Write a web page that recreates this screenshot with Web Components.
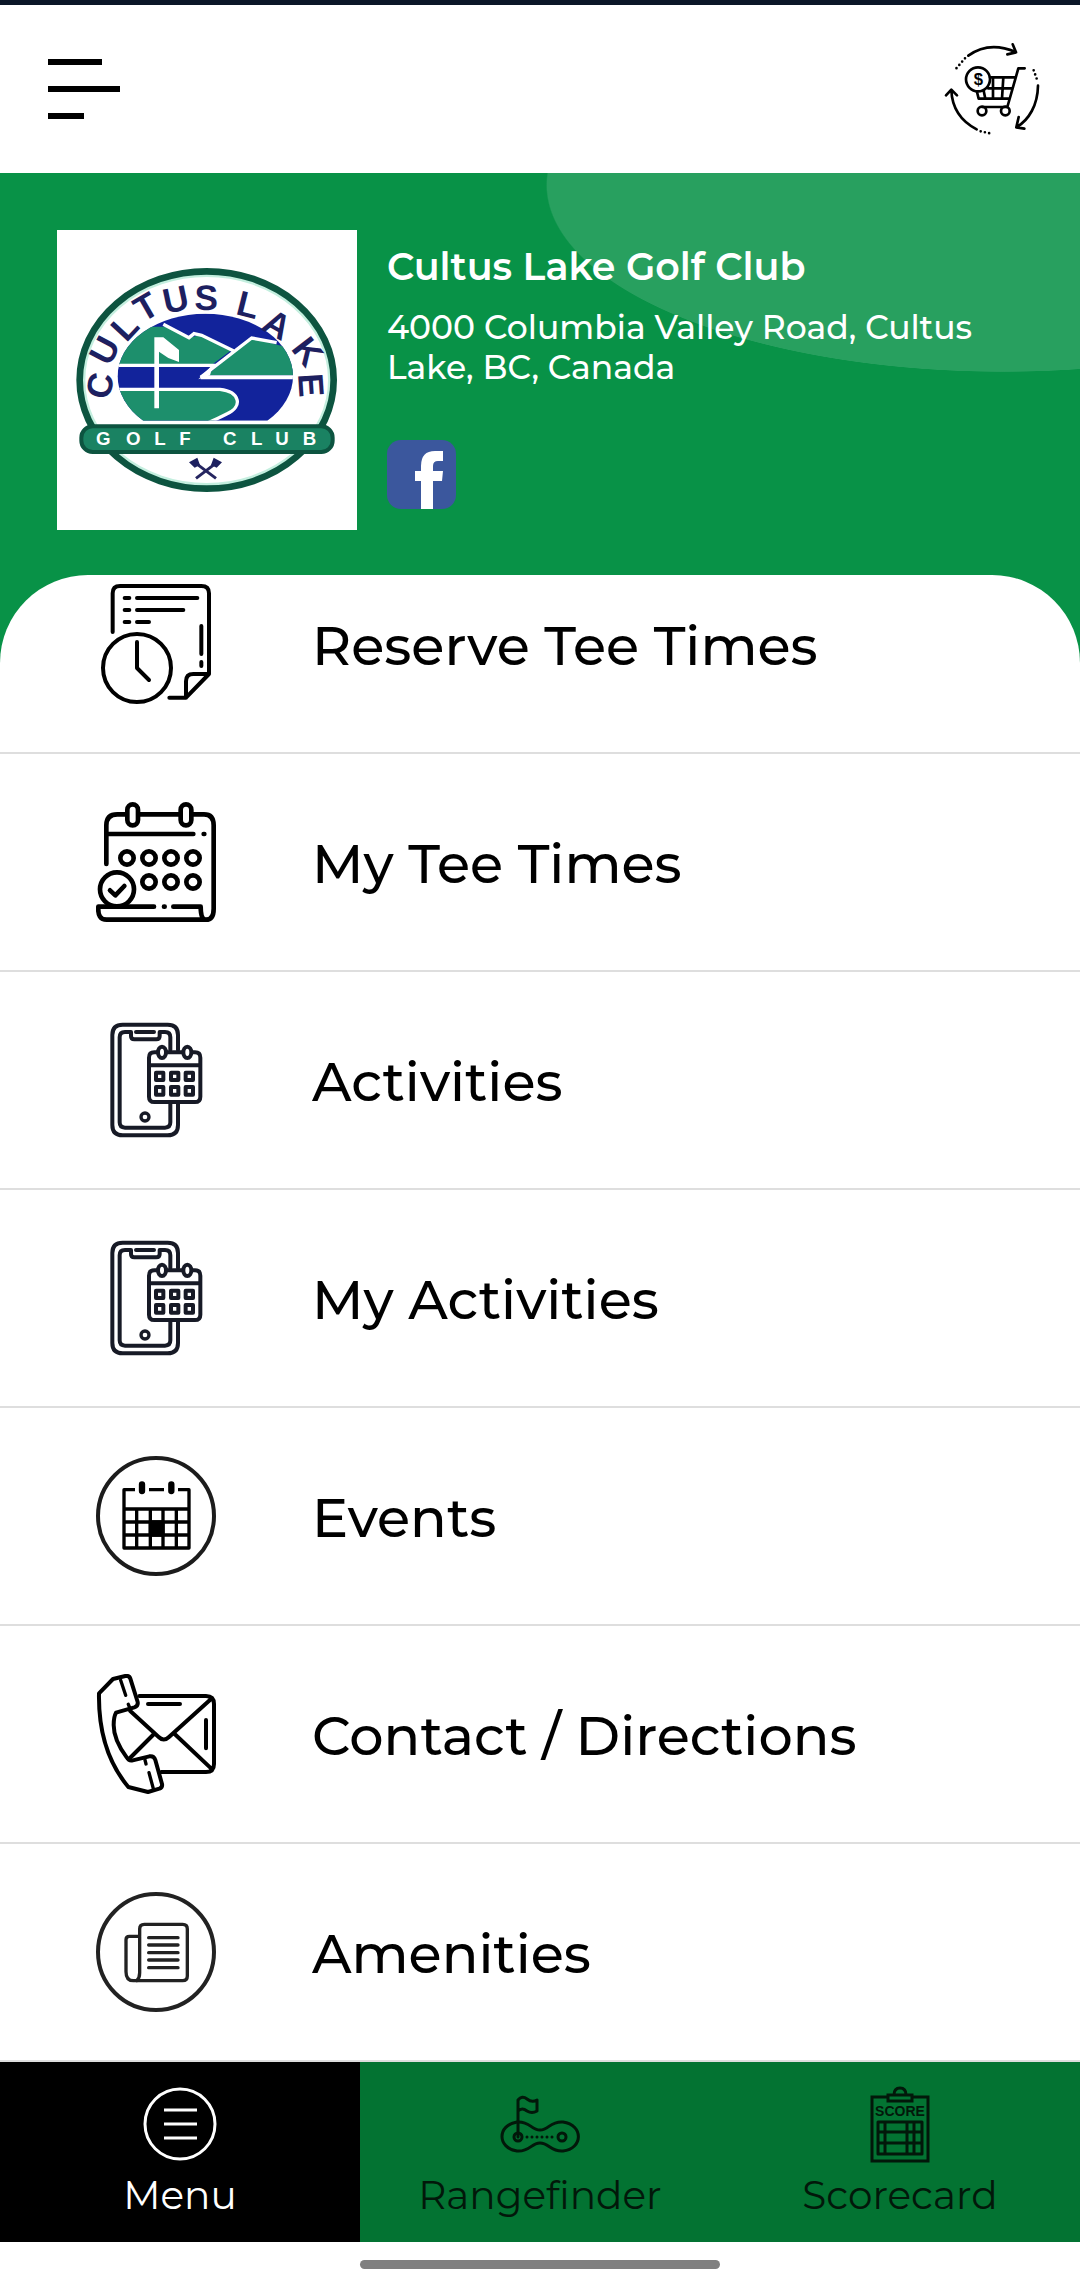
<!DOCTYPE html>
<html lang="en">
<head>
<meta charset="utf-8">
<meta name="viewport" content="width=device-width, initial-scale=1">
<title>Cultus Lake Golf Club</title>
<style>
    body{
        margin: 0;
        background: #fff;
        color: #000;
        font-family: Montserrat, Inter, "Open Sans", sans-serif;
    }
</style>
</head>
<body>
<golf-app></golf-app>

<script>
const icons = {
    reserve: `<svg viewBox="48 72 360 360" stroke-width="12">
        <path d="M98 216V100Q98 78 120 78H364Q387 78 387 100V342L318 413H268M387 342H340Q318 342 318 364V413"/>
        <path d="M134 114H148M171 114H352M134 150H148M171 150H310M134 186H148M171 186H207M364 198V282M364 306V318"/>
        <circle cx="171" cy="324" r="102"/>
        <path d="M171 246V324L207 360"/>
    </svg>`,
    teeTimes: `<svg viewBox="48 66 360 360" stroke-width="14">
        <path d="M79 252V136Q79 103 112 103H136M178 103H298M338 103H372Q401 103 401 136V386Q401 419 378 419Q362 419 362 380H280M222 380H55Q52 419 80 419H378M85 162H340"/>
        <rect x="142" y="73" width="32" height="63" rx="16"/>
        <rect x="302" y="73" width="32" height="63" rx="16"/>
        <circle cx="141" cy="234" r="20"/><circle cx="207" cy="234" r="20"/><circle cx="273" cy="234" r="20"/><circle cx="339" cy="234" r="20"/>
        <circle cx="207" cy="306" r="20"/><circle cx="273" cy="306" r="20"/><circle cx="339" cy="306" r="20"/>
        <circle cx="111" cy="328" r="51"/>
        <path d="M90 331L106 346L133 318M371 162H373M252 380H254"/>
    </svg>`,
    activities: `<svg viewBox="48 60 360 360" stroke="#171a26" stroke-width="12">
        <path d="M294 150V105Q294 74 263 74H128Q97 74 97 105V375Q97 406 128 406H263Q294 406 294 375V312"/>
        <path d="M271 150V112Q271 96 255 96H239V108Q239 118 229 118H163Q153 118 153 108V96H135Q119 96 119 112V367Q119 383 135 383H255Q271 383 271 367V312M168 96H222"/>
        <circle cx="195" cy="351" r="12" stroke-width="10"/>
        <path d="M232 157H223Q207 157 207 173V290Q207 306 223 306H345Q361 306 361 290V173Q361 157 345 157H336M260 157H308M207 196H361"/>
        <ellipse cx="246" cy="157" rx="12" ry="17"/><ellipse cx="322" cy="157" rx="12" ry="17"/>
        <path d="M228 218H250V240H228ZM273 218H295V240H273ZM317 218H339V240H317ZM228 261H250V284H228ZM273 261H295V284H273ZM317 261H339V284H317Z"/>
    </svg>`,
    events: `<svg viewBox="48 48 360 360" stroke-width="10">
        <circle cx="228" cy="228" r="174" stroke="#1c1c1c" stroke-width="12"/>
        <path stroke-linecap="butt" d="M165 149H132V324H327V149H294M207 149H252M132 207H327M132 246H327M132 285H327M170 207V324M211 207V324M249 207V324M289 207V324"/>
        <path d="M211 246H249V285H211Z" fill="#000"/>
        <path stroke-width="19" d="M186 133V153M274 133V153"/>
    </svg>`,
    contact: `<svg viewBox="48 42 360 360" stroke-width="12">
        <path d="M178 108H378Q402 108 402 132V312Q402 336 378 336H244M150 152L236 231Q251 246 267 231L394 116M394 326L284 222M222 222L150 294M204 132H300M378 180V265"/>
        <path d="M57 100L99 57L136 48Q148 46 151 56L173 126Q175 138 163 142L108 158Q101 170 101 195Q101 240 140 292Q147 304 158 301L208 289Q222 287 226 300L246 372Q248 382 238 386L204 396L145 381Q54 272 57 100Z"/>
        <path stroke-width="10" d="M122 61L137 106M145 133L150 145M195 300L198 312M207 338L220 386"/>
    </svg>`,
    amenities: `<svg viewBox="48 36 360 360" stroke="#222" stroke-width="10">
        <circle cx="228" cy="216" r="174" stroke-width="12"/>
        <path d="M179 167V147Q179 133 193 133H308Q322 133 322 147V288Q322 302 308 302H160Q138 302 138 275V179Q138 169 148 169H179V278Q179 294 170 302M206 173H294M206 195H294M206 218H294M206 240H294M206 263H294"/>
    </svg>`,
    menu: `<svg viewBox="0 0 80 80" stroke-width="3">
        <circle cx="40" cy="40" r="35"/>
        <path stroke-linecap="butt" d="M24 26H57M24 40H57M24 54H57"/>
    </svg>`,
    rangefinder: `<svg viewBox="0 0 80 80" stroke-width="3">
        <path d="M18 53V16Q22 11 27 15Q32 19 37 16V27Q32 30 27 27Q22 23 18 27"/>
        <path d="M17 38C30 37 31 46 40 46S50 37 63 38C84 41 83 65 63 67C51 68 49 59 40 59S30 68 17 67C-3 64-3 41 17 38Z"/>
        <circle cx="18" cy="53" r="4"/><circle cx="62" cy="53" r="4"/>
        <path stroke-dasharray="0 5" d="M27 53H56"/>
    </svg>`,
    scorecard: `<svg viewBox="0 0 80 80" stroke-width="3">
        <path stroke-linejoin="miter" d="M28 13H12V77H68V13H52M28 11H52V17H28ZM34 11Q34 4 40 4T46 11"/>
        <text x="40" y="32" text-anchor="middle" fill="currentColor" stroke="none" font-family="Liberation Sans, sans-serif" font-weight="700" font-size="14">SCORE</text>
        <path stroke-width="3" d="M18 38H62V70H18ZM18 48H62M18 59H62M25 38V70M47 38V70M54 38V70"/>
    </svg>`
}

// shared rules for the line icons
const iconStyle = `
    svg{
        display: block;
        flex: none;
        fill: none;
        stroke-linecap: round;
        stroke-linejoin: round;
    }
    svg:not([stroke]){
        stroke: currentColor;
    }`

class AppHeader extends HTMLElement{
    constructor(){
        super();
        this.attachShadow({mode:"open"});
        this.render();
    }
    render(){
        const style = `
        <style>
            :host{
                display: flex;
                justify-content: space-between;
                align-items: center;
                box-sizing: border-box;
                height: 173px;
                padding: 0 38px 0 48px;
                border-top: 5px solid #0b1628;
                background: #fff;
            }
            button{
                padding: 0;
                border: 0;
                background: none;
                color: inherit;
                cursor: pointer;
            }
            .bars{
                display: grid;
                gap: 21px;
                width: 72px;
            }
            .bars span{
                height: 6px;
                background: #000;
            }
            .bars span:first-child{
                width: 54px;
            }
            .bars span:last-child{
                width: 36px;
            }
            ${iconStyle}
        </style>`
        const template = `
        <button class="bars" aria-label="Open navigation">
            <span></span><span></span><span></span>
        </button>
        <button aria-label="Cart">
            <svg width="100" height="100" viewBox="69 57 300 300" stroke-width="8">
                <path d="M148 107Q210 62 290 96M281 73L291 97L265 103"/>
                <path d="M357 197C356 255 330 300 292 322M299 291L292 322L316 326"/>
                <path d="M173 328C125 303 99 265 97 210M81 226L97 209L114 226"/>
                <path stroke-dasharray="0 13" d="M138 115L112 145M344 151L356 184M185 334L222 342"/>
                <circle cx="177" cy="178" r="36"/>
                <path d="M317 145H298L265 261H190M213 172H290M207 205H280M174 216L179 236H270M222 172V236M253 172L249 236M194 212L199 236"/>
                <circle cx="189" cy="273" r="13"/>
                <circle cx="259" cy="273" r="13"/>
                <text x="178" y="196" text-anchor="middle" fill="#000" stroke="none" font-family="Liberation Sans, sans-serif" font-weight="700" font-size="50">$</text>
            </svg>
        </button>`
        this.shadowRoot.innerHTML = `${style} ${template}`
    }
}

class ClubLogo extends HTMLElement{
    constructor(){
        super();
        this.attachShadow({mode:"open"});
        this.render();
    }
    render(){
        const style = `
        <style>
            :host{
                display: block;
                flex: none;
                width: 300px;
                background: #fff;
            }
            svg{
                display: block;
                width: 100%;
            }
            text{
                font-family: "Liberation Sans", sans-serif;
                font-weight: 700;
            }
        </style>`
        // the lettering is set glyph by glyph round the oval
        const template = `
        <svg viewBox="51 60 900 900">
            <defs>
                <clipPath id="scene"><path d="M310 632A263 188 0 1 1 682 632Z"/></clipPath>
            </defs>
            <ellipse cx="500" cy="510" rx="376" ry="321" fill="#fff" stroke="#c4efdf" stroke-width="24"/>
            <ellipse cx="500" cy="510" rx="381" ry="326" fill="none" stroke="#0d5440" stroke-width="20"/>
            <g clip-path="url(#scene)">
                <rect x="230" y="310" width="540" height="330" fill="#12239b"/>
                <path d="M220 465V350H380L447 383L485 374L575 420L515 465Z" fill="#1d8f6c"/>
                <path d="M500 496L635 384L770 420V496Z" fill="#1d8f6c"/>
                <path d="M220 538H540C600 545 610 590 560 612Q535 625 505 640H220Z" fill="#1d8f6c"/>
                <path d="M370 343L447 383L462 371L485 376L580 422M220 466H530M220 538H540C600 545 610 590 560 612Q535 625 500 640M482 502L635 384L710 398" fill="none" stroke="#fff" stroke-width="10"/>
                <path d="M482 502H770" stroke="#fff" stroke-width="12"/>
                <path d="M520 462L475 508L510 496Z" fill="#fff"/>
                <path d="M343 595V382H370L417 420V456L385 444L357 425V595Z" fill="#fff"/>
            </g>
            <text fill="#1d2060" font-size="106" x="209 208 259 308 377 463 540 584 660 751 774" y="571 472 400 338 312 299 298 312 356 417 493" rotate="-80 -62 -47 -30 -12 1 0 14 30 52 86">CULTUS LAKE</text>
            <rect x="124" y="649" width="754" height="77" rx="34" fill="#1a8262" stroke="#0d5440" stroke-width="12"/>
            <text fill="#fff" font-size="56" x="168 258 343 418 500 549 633 706 788" y="706">GOLF CLUB</text>
            <path d="M468 805L530 758M528 805L465 758" stroke="#252560" stroke-width="9" fill="none"/>
            <path d="M447 757L472 743L480 765L464 773ZM546 757L521 743L513 765L530 773Z" fill="#1d2060"/>
        </svg>`
        this.shadowRoot.innerHTML = `${style} ${template}`
    }
}

class ClubBanner extends HTMLElement{
    constructor(){
        super();
        this.attachShadow({mode:"open"});
        this.render();
    }
    render(){
        const style = `
        <style>
            :host{
                display: flex;
                gap: 30px;
                padding: 57px 57px 45px;
                color: #fff;
                background: radial-gradient(ellipse 457px 187px at calc(100% - 77px) 12px, #28a05f 99.7%, transparent) #089247;
            }
            .details{
                display: flex;
                flex-direction: column;
                align-items: flex-start;
                padding-top: 13px;
            }
            h1{
                margin: 0 0 16px;
                font-size: 38px;
                line-height: 48px;
                font-weight: 600;
            }
            p{
                max-width: 620px;
                margin: 0;
                font-size: 33px;
                line-height: 40px;
                font-weight: 500;
            }
            a{
                display: block;
                margin-top: 53px;
            }
            svg{
                display: block;
            }
        </style>`
        const template = `
        <club-logo></club-logo>
        <div class="details">
            <h1><slot name="name"></slot></h1>
            <p><slot name="address"></slot></p>
            <a href="#facebook" aria-label="Facebook">
                <svg width="69" height="69" viewBox="0 0 69 69">
                    <rect width="69" height="69" rx="14" fill="#3b579d"/>
                    <path fill="#fff" d="M34 69V41H28V31H34V26Q34 11 48 11H56V21H51Q46 21 46 26V31H56L55 41H46V69Z"/>
                </svg>
            </a>
        </div>`
        this.shadowRoot.innerHTML = `${style} ${template}`
    }
}

class MenuList extends HTMLElement{
    constructor(){
        super();
        this.attachShadow({mode:"open"});
        this.render();
    }
    // the list is shown scrolled a little, so its first row starts above the panel
    render(){
        const style = `
        <style>
            :host{
                display: block;
                background: #089247;
            }
            nav{
                height: 100%;
                overflow: hidden;
                border-radius: 88px 88px 0 0;
                background: #fff;
            }
            .rows{
                margin-top: -39px;
            }
        </style>`
        const template = `<nav><div class="rows"><slot></slot></div></nav>`
        this.shadowRoot.innerHTML = `${style} ${template}`
    }
}

class MenuRow extends HTMLElement{
    constructor(){
        super();
        this.attachShadow({mode:"open"});
        this.render();
    }
    render(){
        const style = `
        <style>
            :host{
                display: block;
            }
            a{
                display: flex;
                align-items: center;
                gap: 96px;
                box-sizing: border-box;
                height: 218px;
                padding: 0 96px;
                border-bottom: 2px solid #dedede;
                color: #000;
                font-size: 54px;
                line-height: 64px;
                font-weight: 500;
                text-decoration: none;
            }
            span{
                padding-top: 4px;
            }
            svg{
                width: 120px;
                height: 120px;
            }
            ${iconStyle}
        </style>`
        const template = `
        <a href="#${this.getAttribute("icon")}">
            ${icons[this.getAttribute("icon")]}
            <span><slot></slot></span>
        </a>`
        this.shadowRoot.innerHTML = `${style} ${template}`
    }
}

class TabItem extends HTMLElement{
    constructor(){
        super();
        this.attachShadow({mode:"open"});
        this.render();
    }
    render(){
        const style = `
        <style>
            :host{
                display: block;
                background: #037332;
                color: #02180a;
            }
            :host([active]){
                background: #000;
                color: #fff;
            }
            a{
                display: flex;
                flex-direction: column;
                align-items: center;
                gap: 6px;
                box-sizing: border-box;
                height: 180px;
                padding-top: 22px;
                color: inherit;
                font-size: 39px;
                line-height: 50px;
                font-weight: 400;
                text-decoration: none;
            }
            svg{
                width: 80px;
                height: 80px;
            }
            ${iconStyle}
        </style>`
        const template = `
        <a href="#${this.getAttribute("icon")}">
            ${icons[this.getAttribute("icon")]}
            <span><slot></slot></span>
        </a>`
        this.shadowRoot.innerHTML = `${style} ${template}`
    }
}

class TabBar extends HTMLElement{
    constructor(){
        super();
        this.attachShadow({mode:"open"});
        this.render();
    }
    render(){
        const style = `
        <style>
            :host{
                display: block;
                background: #fff;
            }
            nav{
                display: grid;
                grid-template-columns: repeat(3, 1fr);
            }
            .handle{
                width: 33.33%;
                height: 9px;
                margin: 18px auto 21px;
                border-radius: 5px;
                background: #808080;
            }
        </style>`
        const template = `
        <nav><slot></slot></nav>
        <div class="handle"></div>`
        this.shadowRoot.innerHTML = `${style} ${template}`
    }
}

class GolfApp extends HTMLElement{
    constructor(){
        super();
        this.attachShadow({mode:"open"});
        this.render();
    }
    render(){
        const style = `
        <style>
            :host{
                display: flex;
                flex-direction: column;
                min-height: 100vh;
            }
            menu-list{
                flex: 1;
            }
        </style>`
        const template = `
        <app-header></app-header>
        <club-banner>
            <span slot="name">Cultus Lake Golf Club</span>
            <span slot="address">4000 Columbia Valley Road, Cultus Lake, BC, Canada</span>
        </club-banner>
        <menu-list>
            <menu-row icon="reserve">Reserve Tee Times</menu-row>
            <menu-row icon="teeTimes">My Tee Times</menu-row>
            <menu-row icon="activities">Activities</menu-row>
            <menu-row icon="activities">My Activities</menu-row>
            <menu-row icon="events">Events</menu-row>
            <menu-row icon="contact">Contact / Directions</menu-row>
            <menu-row icon="amenities">Amenities</menu-row>
        </menu-list>
        <tab-bar>
            <tab-item icon="menu" active>Menu</tab-item>
            <tab-item icon="rangefinder">Rangefinder</tab-item>
            <tab-item icon="scorecard">Scorecard</tab-item>
        </tab-bar>`
        this.shadowRoot.innerHTML = `${style} ${template}`
    }
}

customElements.define("app-header", AppHeader)
customElements.define("club-logo", ClubLogo)
customElements.define("club-banner", ClubBanner)
customElements.define("menu-list", MenuList)
customElements.define("menu-row", MenuRow)
customElements.define("tab-item", TabItem)
customElements.define("tab-bar", TabBar)
customElements.define("golf-app", GolfApp)
</script>
</body>
</html>
